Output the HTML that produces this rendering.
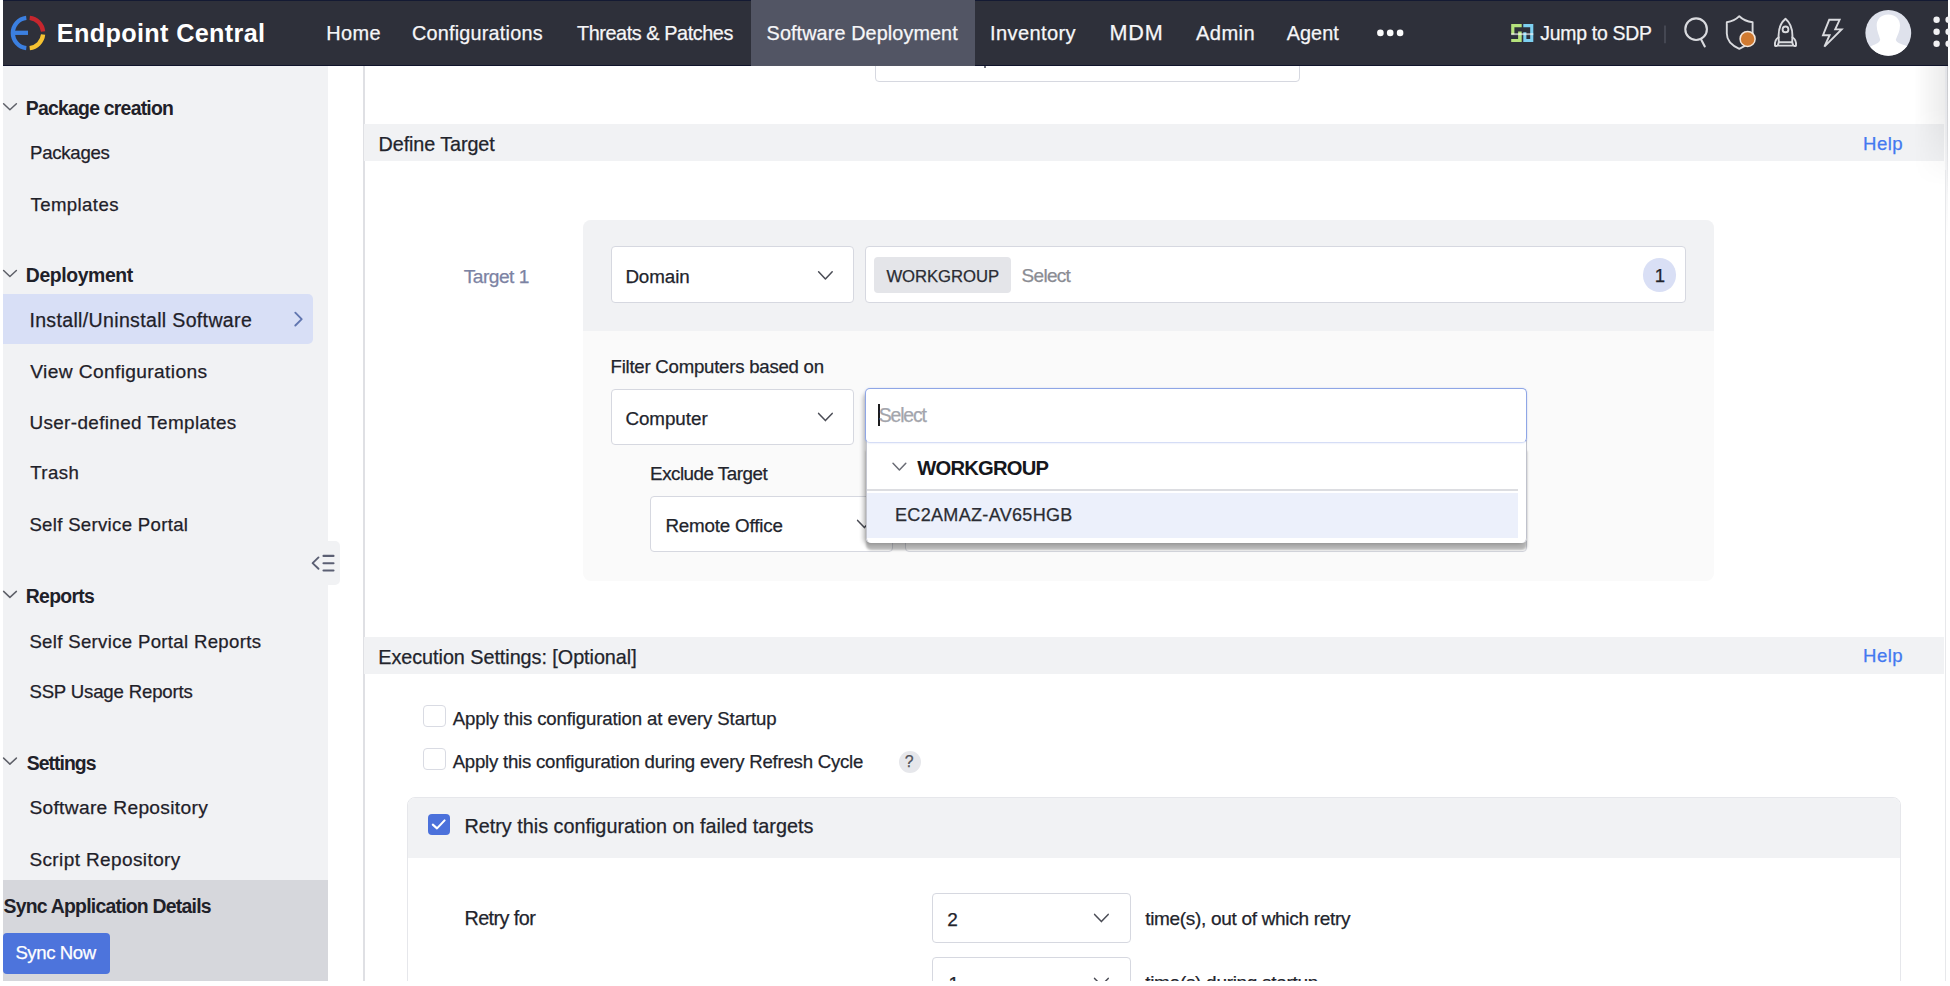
<!DOCTYPE html>
<html lang="en"><head><meta charset="utf-8"><title>Endpoint Central</title>
<style>
html,body{margin:0;padding:0;background:#fff;}
body{width:1950px;height:986px;overflow:hidden;position:relative;font-family:"Liberation Sans",sans-serif;}
#app{position:absolute;left:0;top:0;width:1950px;height:981px;overflow:hidden;background:#fff;}
#app div,#app svg{position:absolute;box-sizing:border-box;}
.t{position:absolute;white-space:pre;line-height:normal;font-family:"Liberation Sans",sans-serif;margin:0;padding:0;border:0;background:none;font-weight:400;text-decoration:none;display:block;}
#hdr{left:3.3px;top:0;width:1945px;height:66px;background:#2e303a;border-top:1px solid #141a33;border-bottom:1px solid #10142b;}
#tab{left:750.5px;top:0;width:224.5px;height:66px;background:#525564;}
#side{left:3.2px;top:66px;width:324.4px;height:915px;background:#f1f2f4;}
#sel{left:3px;top:294px;width:310.1px;height:49.9px;background:#d8dff6;border-radius:0 5px 5px 0;}
#sync{left:3.2px;top:880.3px;width:324.4px;height:100.7px;background:#d6d7dc;}
#syncbtn{left:3px;top:932.5px;width:107.2px;height:41px;background:#4d74dc;border-radius:4px;}
#collapse{left:311px;top:540.7px;width:29.4px;height:44px;background:#f1f2f4;border-radius:0 5px 5px 0;}
#vline{left:363.2px;top:66px;width:1.4px;height:915px;background:#dfe0e4;}
.bar{left:364.4px;width:1580px;height:37.5px;background:#f1f2f4;}
.box{background:#fff;border:1px solid #d6d8e0;border-radius:4px;}
.t{-webkit-text-stroke:0.25px currentColor;}

</style></head>
<body>
<div id="app">
<main>
<!-- main content shapes -->
<div id="vline"></div>
<div class="box" style="left:875px;top:30px;width:425px;height:51.500px;"></div>
<div class="bar" style="top:123.700px;"></div>
<div class="bar" style="top:637.200px;height:36.800px;"></div>

<!-- target panel -->
<div style="left:583px;top:220px;width:1131px;height:360.500px;background:#fafafa;border-radius:8px;"></div>
<div style="left:583px;top:220px;width:1131px;height:110.600px;background:#f1f2f4;border-radius:8px 8px 0 0;"></div>
<div class="box" style="left:611.300px;top:246.400px;width:243px;height:56.500px;"></div>
<div class="box" style="left:865.300px;top:246.300px;width:820.700px;height:56.500px;"></div>
<div style="left:873.500px;top:257.400px;width:137.500px;height:36px;background:#e4e5e9;border-radius:4px;"></div>
<div style="left:1642.800px;top:258.300px;width:33.600px;height:33.600px;background:#d9dff5;border-radius:50%;"></div>
<div class="box" style="left:611px;top:389px;width:243px;height:55.500px;"></div>
<div class="box" style="left:650px;top:496px;width:243px;height:56px;"></div>
<div class="box" style="left:905px;top:496px;width:622px;height:56px;"></div>
<svg width="20" height="12" viewBox="0 0 20 12" style="left:855.500px;top:518px;" fill="none"><path d="M1.600 2.400L8.400 9.600L15.200 2.400" stroke="#4a4c55" stroke-width="1.500" stroke-linecap="round" stroke-linejoin="round"/></svg>
<!-- dropdown -->
<div style="left:866px;top:392px;width:661px;height:151px;background:#fff;border-radius:5px;box-shadow:-3px 1px 4px rgba(0,0,0,.24);"></div>
<div style="left:866px;top:444px;width:661px;height:99px;background:#fff;border-radius:0 0 5px 5px;box-shadow:0 7px 2.500px rgba(0,0,0,.29);"></div>
<div style="left:866px;top:440px;width:661px;height:103px;background:#fff;border-left:1px solid #c5c7d0;border-right:1.500px solid #c0c2cc;border-radius:0 0 5px 5px;"></div>
<div style="left:867px;top:489px;width:651px;height:1.500px;background:#dcdde1;"></div>
<div style="left:867px;top:492.500px;width:651px;height:45.500px;background:#ecf0fb;"></div>
<div style="left:865px;top:388.300px;width:662px;height:55.200px;background:#fff;border:1.800px solid #8fa6e6;border-bottom:1.500px solid #d5ddf6;border-radius:5px;box-shadow:0 0 2px rgba(77,116,220,.25);"></div>
<div style="left:877.800px;top:404.200px;width:2.100px;height:22px;background:#1c1c1e;"></div>

<!-- execution settings -->
<div class="box" style="left:423px;top:705.300px;width:22.500px;height:21.400px;border-color:#d9dbe3;"></div>
<div class="box" style="left:423px;top:748.300px;width:22.500px;height:21.400px;border-color:#d9dbe3;"></div>
<div style="left:898.900px;top:750.500px;width:22px;height:22px;background:#e6e7eb;border-radius:50%;"></div>
<div style="left:406.500px;top:797.300px;width:1494.700px;height:200px;background:#fff;border:1px solid #e6e7eb;border-radius:8px;"></div>
<div style="left:407.500px;top:798.300px;width:1492.700px;height:59.400px;background:#f1f2f4;border-radius:7px 7px 0 0;"></div>
<div style="left:427.500px;top:813.800px;width:22px;height:21.600px;background:#4b71db;border-radius:4px;"></div>
<div class="box" style="left:932px;top:893px;width:199px;height:50px;"></div>
<div class="box" style="left:932px;top:957px;width:199px;height:50px;"></div>

<!-- right edge shadow -->
<div style="left:1914px;top:66px;width:30.500px;height:120px;background:linear-gradient(to right,rgba(0,0,0,0),rgba(0,0,0,.075));-webkit-mask-image:linear-gradient(to bottom,#000 0%,#000 35%,transparent 100%);mask-image:linear-gradient(to bottom,#000 0%,#000 35%,transparent 100%);"></div>
<div style="left:1944.500px;top:66px;width:6px;height:915px;background:#fff;"></div>
<div style="left:1944.500px;top:66px;width:6px;height:170px;background:linear-gradient(to bottom,#e2e3e7 0%,#e9eaed 40%,#fff 100%);"></div>
<div style="left:1947px;top:66px;width:1.300px;height:130px;background:linear-gradient(to bottom,#c6c7cb,rgba(225,226,230,0));"></div>
<div style="left:1944.800px;top:170px;width:1.400px;height:811px;background:#e7e8eb;"></div>

<h3 class="t" style="left:378.6px;top:132.8px;font-size:19.8px;color:#22242c;letter-spacing:-0.10px;">Define Target</h3>
<a class="t" style="left:1863.0px;top:133.0px;font-size:18.6px;color:#4479f0;letter-spacing:0.47px;">Help</a>
<label class="t" style="left:463.8px;top:265.6px;font-size:19.2px;color:#7c83a3;letter-spacing:-0.54px;">Target 1</label>
<span class="t" style="left:625.4px;top:266.2px;font-size:18.8px;color:#22242c;letter-spacing:-0.08px;">Domain</span>
<span class="t" style="left:886.4px;top:267.4px;font-size:16.7px;color:#2a2c33;letter-spacing:-0.05px;">WORKGROUP</span>
<span class="t" style="left:1021.6px;top:264.7px;font-size:19px;color:#8a8c93;letter-spacing:-0.72px;">Select</span>
<span class="t" style="left:1654.8px;top:265.2px;font-size:18.6px;color:#22242c;letter-spacing:0.00px;">1</span>
<label class="t" style="left:610.5px;top:355.6px;font-size:18.6px;color:#22242c;letter-spacing:-0.23px;">Filter Computers based on</label>
<span class="t" style="left:625.4px;top:408.2px;font-size:18.8px;color:#22242c;letter-spacing:-0.03px;">Computer</span>
<span class="t" style="left:878.8px;top:404.2px;font-size:19.4px;color:#a3a5ac;letter-spacing:-1.16px;">Select</span>
<span class="t" style="left:917.2px;top:456.7px;font-size:20.2px;color:#16171c;letter-spacing:-0.78px;font-weight:700;-webkit-text-stroke:0;">WORKGROUP</span>
<span class="t" style="left:895.0px;top:505.4px;font-size:18.04px;color:#2a2c33;letter-spacing:0.31px;">EC2AMAZ-AV65HGB</span>
<label class="t" style="left:650.1px;top:462.7px;font-size:18.8px;color:#22242c;letter-spacing:-0.49px;">Exclude Target</label>
<span class="t" style="left:665.4px;top:515.0px;font-size:18.8px;color:#22242c;letter-spacing:-0.18px;">Remote Office</span>
<h3 class="t" style="left:378.3px;top:645.6px;font-size:19.8px;color:#22242c;letter-spacing:-0.04px;">Execution Settings: [Optional]</h3>
<a class="t" style="left:1863.0px;top:645.4px;font-size:18.6px;color:#4479f0;letter-spacing:0.47px;">Help</a>
<label class="t" style="left:452.7px;top:708.2px;font-size:18.6px;color:#22242c;letter-spacing:-0.12px;">Apply this configuration at every Startup</label>
<label class="t" style="left:452.7px;top:751.3px;font-size:18.6px;color:#22242c;letter-spacing:-0.22px;">Apply this configuration during every Refresh Cycle</label>
<span class="t" style="left:904.7px;top:752.8px;font-size:15.8px;color:#50525a;letter-spacing:0.00px;">?</span>
<label class="t" style="left:464.4px;top:814.5px;font-size:19.8px;color:#22242c;letter-spacing:0.01px;">Retry this configuration on failed targets</label>
<label class="t" style="left:464.4px;top:907.3px;font-size:19.8px;color:#22242c;letter-spacing:-0.55px;">Retry for</label>
<span class="t" style="left:947.2px;top:909.2px;font-size:19px;color:#22242c;letter-spacing:0.00px;">2</span>
<span class="t" style="left:1145.2px;top:907.6px;font-size:19px;color:#22242c;letter-spacing:-0.31px;">time(s), out of which retry</span>
<span class="t" style="left:948.5px;top:972.6px;font-size:19px;color:#22242c;letter-spacing:0.00px;">1</span>
<span class="t" style="left:1145.2px;top:971.6px;font-size:19px;color:#22242c;letter-spacing:-0.30px;">time(s) during startup</span>
</main>
<aside>
<!-- sidebar -->
<div id="side"></div>
<div id="sel"></div>
<div id="collapse"></div>
<div id="sync"></div>
<div id="syncbtn"></div>

<span class="t" style="left:25.8px;top:97.2px;font-size:19.4px;color:#1f2129;letter-spacing:-0.76px;font-weight:700;-webkit-text-stroke:0;">Package creation</span>
<a class="t" style="left:30.0px;top:141.9px;font-size:18.6px;color:#1f2129;letter-spacing:-0.26px;">Packages</a>
<a class="t" style="left:30.5px;top:193.8px;font-size:18.6px;color:#1f2129;letter-spacing:0.40px;">Templates</a>
<span class="t" style="left:25.8px;top:264.0px;font-size:19.4px;color:#1f2129;letter-spacing:-0.40px;font-weight:700;-webkit-text-stroke:0;">Deployment</span>
<a class="t" style="left:29.4px;top:309.0px;font-size:19.55px;color:#1f2129;letter-spacing:0.34px;">Install/Uninstall Software</a>
<a class="t" style="left:30.3px;top:360.7px;font-size:19.19px;color:#1f2129;letter-spacing:0.36px;">View Configurations</a>
<a class="t" style="left:29.4px;top:412.0px;font-size:18.91px;color:#1f2129;letter-spacing:0.36px;">User-defined Templates</a>
<a class="t" style="left:30.3px;top:462.3px;font-size:18.6px;color:#1f2129;letter-spacing:0.40px;">Trash</a>
<a class="t" style="left:29.4px;top:513.8px;font-size:18.6px;color:#1f2129;letter-spacing:0.31px;">Self Service Portal</a>
<span class="t" style="left:25.8px;top:584.8px;font-size:19.4px;color:#1f2129;letter-spacing:-0.70px;font-weight:700;-webkit-text-stroke:0;">Reports</span>
<a class="t" style="left:29.4px;top:630.5px;font-size:18.6px;color:#1f2129;letter-spacing:0.32px;">Self Service Portal Reports</a>
<a class="t" style="left:29.4px;top:681.2px;font-size:18.6px;color:#1f2129;letter-spacing:-0.16px;">SSP Usage Reports</a>
<span class="t" style="left:26.8px;top:751.5px;font-size:19.4px;color:#1f2129;letter-spacing:-0.97px;font-weight:700;-webkit-text-stroke:0;">Settings</span>
<a class="t" style="left:29.4px;top:797.3px;font-size:19.2px;color:#1f2129;letter-spacing:0.31px;">Software Repository</a>
<a class="t" style="left:29.4px;top:848.8px;font-size:18.99px;color:#1f2129;letter-spacing:0.40px;">Script Repository</a>
<span class="t" style="left:3.5px;top:894.9px;font-size:19.4px;color:#1f2129;letter-spacing:-0.76px;font-weight:700;-webkit-text-stroke:0;">Sync Application Details</span>
<button class="t" style="left:15.4px;top:942.4px;font-size:18.6px;color:#ffffff;letter-spacing:-0.43px;">Sync Now</button>
</aside>
<header>
<!-- header -->
<div id="hdr"></div>
<div id="tab"></div>
<div style="left:984.300px;top:66px;width:1.600px;height:1.500px;background:#6f717c;"></div>
<span class="t" style="left:56.8px;top:18.6px;font-size:25.2px;color:#ffffff;letter-spacing:0.36px;font-weight:700;-webkit-text-stroke:0;">Endpoint Central</span>
<a class="t" style="left:326.3px;top:21.8px;font-size:19.96px;color:#f6f6f8;letter-spacing:0.33px;">Home</a>
<a class="t" style="left:412.0px;top:21.8px;font-size:19.8px;color:#f6f6f8;letter-spacing:0.23px;">Configurations</a>
<a class="t" style="left:577.0px;top:21.8px;font-size:19.8px;color:#f6f6f8;letter-spacing:-0.40px;">Threats &amp; Patches</a>
<a class="t" style="left:766.6px;top:21.8px;font-size:19.8px;color:#f6f6f8;letter-spacing:0.11px;">Software Deployment</a>
<a class="t" style="left:990.0px;top:21.8px;font-size:20.08px;color:#f6f6f8;letter-spacing:0.38px;">Inventory</a>
<a class="t" style="left:1109.4px;top:19.8px;font-size:21.58px;color:#f6f6f8;letter-spacing:0.90px;">MDM</a>
<a class="t" style="left:1196.0px;top:21.8px;font-size:20.11px;color:#f6f6f8;letter-spacing:0.40px;">Admin</a>
<a class="t" style="left:1286.7px;top:21.8px;font-size:19.8px;color:#f6f6f8;letter-spacing:0.10px;">Agent</a>
<a class="t" style="left:1540.3px;top:22.4px;font-size:19.4px;color:#f6f6f8;letter-spacing:-0.26px;">Jump to SDP</a>
</header>
<div style="left:1948px;top:0;width:2px;height:981px;background:#fff;"></div>

<svg id="icons" width="1950" height="981" viewBox="0 0 1950 981" style="left:0;top:0;" fill="none">
  <!-- logo -->
  <g stroke-width="4.3" stroke-linecap="butt" fill="none">
    <path d="M26.3 17.9 A15.2 15.2 0 0 0 26.3 48.1" stroke="#3b7fe0"/>
    <path d="M13 32.8 H28" stroke="#3b7fe0"/>
    <path d="M29.7 17.9 A15.2 15.2 0 0 1 43.1 31.4" stroke="#c6262e"/>
    <path d="M43.1 34.6 A15.2 15.2 0 0 1 29.7 48.1" stroke="#f6c231"/>
  </g>

  <!-- nav dots -->
  <g fill="#fbfbfc"><circle cx="1380.400" cy="32.900" r="3.300"/><circle cx="1390.200" cy="32.900" r="3.300"/><circle cx="1400.100" cy="32.900" r="3.300"/></g>
  <!-- SDP icon -->
  <g>
    <path d="M1511.2 24.1H1521.700V27.2H1514.400V34.400H1511.2Z M1518.100 31.400H1521.700V42H1511.2V39H1518.100Z" fill="#b5e27c"/>
    <path d="M1523.300 24.1H1533.300V42H1523.300V32.300H1526.400V39H1530.200V27.2H1523.300Z" fill="#7dd0f1"/>
    <rect x="1511.2" y="33.200" width="22.100" height="1.900" fill="#ffffff" opacity=".6"/>
  </g>
  <path d="M1665 25.6V43.3" stroke="#555863" stroke-width="1.2"/>
  <!-- search -->
  <g stroke="#d9dade" stroke-width="2.1" stroke-linecap="round">
    <circle cx="1696.100" cy="29.200" r="10.800"/>
    <path d="M1701 39.200L1704.800 46.400"/>
  </g>
  <!-- shield -->
  <path d="M1739.3 16.2C1736 19.6 1731.5 21.6 1726.8 22.2V33.5C1726.8 40.5 1732 45.6 1739.3 48.8C1746.6 45.6 1752.6 40.5 1752.6 33.5V22.2C1747.6 21.6 1742.8 19.6 1739.3 16.2Z" stroke="#d9dade" stroke-width="1.9" stroke-linejoin="round"/>
  <circle cx="1747.600" cy="38.900" r="7.500" fill="#d07a31" stroke="#f1e6dc" stroke-width="1.500"/>
  <!-- rocket -->
  <g stroke="#d9dade" stroke-width="1.900" stroke-linejoin="round" stroke-linecap="round">
    <path d="M1785.5 18.8C1780.6 23 1778.4 29.5 1778.6 36.5L1778.8 42.2H1792.2L1792.4 36.5C1792.6 29.5 1790.4 23 1785.5 18.8Z"/>
    <circle cx="1785.5" cy="29.4" r="2.9"/>
    <path d="M1778.6 37.2C1775.6 39 1774.6 41.8 1775 45.6C1775.6 46 1777 46 1777.8 45.4L1778.8 42.2"/>
    <path d="M1792.4 37.2C1795.4 39 1796.4 41.8 1796 45.6C1795.4 46 1794 46 1793.2 45.4L1792.2 42.2"/>
    <path d="M1778.8 45.6H1792.2"/>
  </g>
  <!-- bolt -->
  <path d="M1829.2 19.8H1839.6L1835.2 29.4H1841.6L1824.4 46.6L1829.6 35.2H1823L1829.2 19.8Z" stroke="#d9dade" stroke-width="1.900" stroke-linejoin="miter"/>
  <!-- avatar -->
  <g>
    <circle cx="1888.3" cy="32.9" r="22.9" fill="#dfe2ec"/>
    <clipPath id="avc"><circle cx="1888.3" cy="32.9" r="22.9"/></clipPath>
    <g clip-path="url(#avc)" fill="#ffffff">
      <path d="M1888.3 14.5C1896 14.5 1900 19.500 1900 25.500C1900 31 1897.500 35 1895.800 39.700C1896.500 42.500 1901 44 1905.700 45.500L1912 50V58H1864V50L1872.400 45.500C1876 44 1879.500 42.500 1880.200 39.700C1879 35 1876.700 31 1876.700 25.500C1876.700 19.500 1880.500 14.500 1888.3 14.5Z"/>
    </g>
  </g>
  <!-- grid dots -->
  <g fill="#f1f1f3">
    <circle cx="1936.6" cy="19.7" r="3.2"/><circle cx="1936.6" cy="31.7" r="3.2"/><circle cx="1936.6" cy="43.8" r="3.2"/>
    <circle cx="1948.6" cy="19.7" r="3.2"/><circle cx="1948.6" cy="31.7" r="3.2"/><circle cx="1948.6" cy="43.8" r="3.2"/>
  </g>
  <!-- sidebar chevrons -->
  <g stroke="#5e6068" stroke-width="1.5" stroke-linecap="round" stroke-linejoin="round">
    <path d="M3.6 103.8L9.9 109.8L16.4 103.8"/>
    <path d="M3.6 270.5L9.9 276.5L16.4 270.5"/>
    <path d="M3.6 591.4L9.9 597.4L16.4 591.4"/>
    <path d="M3.6 758.1L9.9 764.1L16.4 758.1"/>
  </g>
  <path d="M295.3 312.700L301.700 319.100L295.3 325.500" stroke="#6176b0" stroke-width="1.9" stroke-linecap="round" stroke-linejoin="round"/>
  <!-- collapse icon -->
  <g stroke="#5b5f73" stroke-width="2.1" stroke-linecap="round">
    <path d="M318.5 557.400L312.600 563.100L318.500 568.800" stroke-linejoin="round" stroke-width="1.9"/>
    <path d="M323.500 555.900H333.500M323.500 563.200H333.500M323.500 570.500H333.500"/>
  </g>
  <!-- select chevrons -->
  <g stroke="#4a4c55" stroke-width="1.5" stroke-linecap="round" stroke-linejoin="round">
    <path d="M818.6 271.8L825.4 279L832.2 271.8"/>
    <path d="M818.6 413.4L825.4 420.6L832.2 413.4"/>
    <path d="M1094.6 914.4L1101.4 921.6L1108.2 914.4"/>
    <path d="M1094.6 978.4L1101.4 985.6L1108.2 978.4"/>
    <path d="M893 463.2L899.4 470L905.8 463.2" stroke="#6a6c75"/>
  </g>
  <!-- checkmark -->
  <path d="M432.8 824.6L437 828.4L444.6 820.4" stroke="#fff" stroke-width="2.1" stroke-linecap="round" stroke-linejoin="round"/>
</svg>

</div>
</body></html>
